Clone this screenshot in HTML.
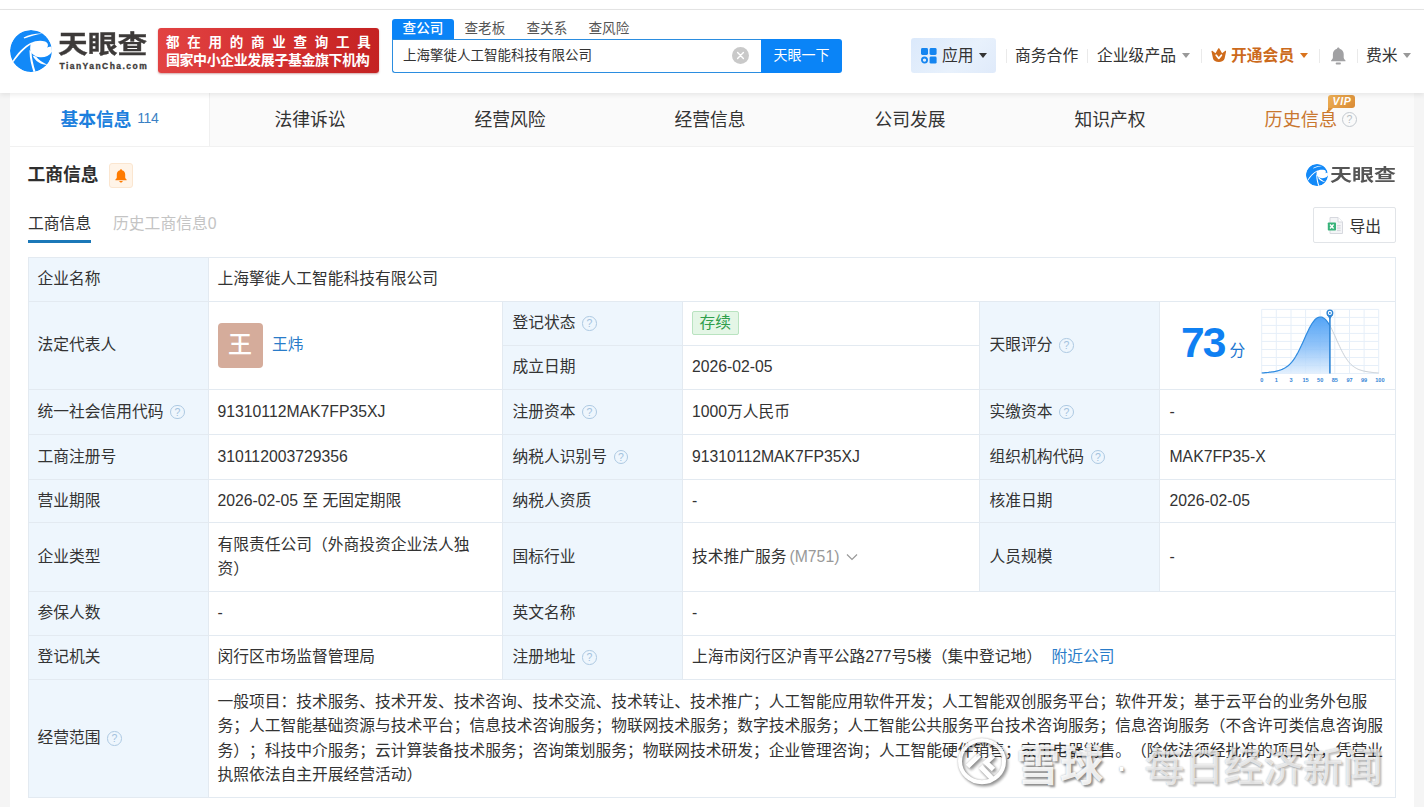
<!DOCTYPE html>
<html lang="zh-CN">
<head>
<meta charset="utf-8">
<title>天眼查</title>
<style>
*{box-sizing:border-box;margin:0;padding:0}
html,body{width:1424px;height:807px;overflow:hidden}
body{position:relative;background:#f5f5f5;font-family:"Liberation Sans","Noto Sans CJK SC",sans-serif;color:#333;text-spacing-trim:space-all;-webkit-font-smoothing:antialiased}
.abs{position:absolute;white-space:nowrap}
/* header */
#topstrip{left:0;top:0;width:1424px;height:9px;background:#fff}
#topline{left:0;top:9px;width:1424px;height:1px;background:#e6e6e6}
#header{left:0;top:10px;width:1424px;height:83px;background:#fff;box-shadow:0 2px 5px rgba(0,0,0,.08)}
#logotext{left:57.8px;top:24.5px;font-size:24.5px;font-weight:700;color:#3d3a39;-webkit-text-stroke:.35px #3d3a39;line-height:40px;letter-spacing:0;transform-origin:0 50%;transform:scaleX(1.215)}
#logosub{left:59.5px;top:58.5px;font-size:8.5px;font-weight:700;color:#3d3a39;-webkit-text-stroke:.3px #3d3a39;line-height:14px;letter-spacing:1.45px}
#banner{left:158px;top:28px;width:221px;height:45px;border-radius:3px;background:linear-gradient(90deg,#e24343 0%,#d32f2f 55%,#c42222 100%);box-shadow:0 1px 2px rgba(120,0,0,.35)}
#banner div{position:absolute;left:8px;color:#fff;font-weight:700;white-space:nowrap}
#b1{top:6px;left:8.5px;font-size:13.5px;line-height:18px;letter-spacing:7.75px}
#b2{top:23px;left:8.5px;font-size:14px;line-height:18px;letter-spacing:-.45px}
.stab{top:19px;height:20px;line-height:19px;font-size:13.6px;color:#555}
#stab1{left:392px;width:62px;background:#0a84f7;color:#fff;text-align:center;border-radius:3px 3px 0 0;font-weight:500}
#sinput{left:392px;top:39px;width:371px;height:34px;border:1px solid #2b8de0;border-right:none;border-radius:0 0 0 3px;background:#fff;font-size:13.5px;line-height:31.5px;padding-left:10px;color:#333}
#sbtn{left:761px;top:39px;width:81px;height:34px;background:#0a84f7;border-radius:0 3px 3px 0;color:#fff;font-size:14px;line-height:33px;text-align:center;font-weight:400}
#sclear{left:731.5px;top:46.5px;width:17px;height:17px;border-radius:50%;background:#c9c9c9}
#app{left:911px;top:38px;width:85px;height:35px;border-radius:3px;background:linear-gradient(135deg,#dbe9fb 0%,#e8f1fc 60%,#dfeafa 100%)}
.nav{top:44px;font-size:15.8px;line-height:24px;color:#333}
.sep{top:49px;width:1px;height:14px;background:#eaeaea}
.caret{width:0;height:0;border-left:4px solid transparent;border-right:4px solid transparent;border-top:5px solid #999}
/* tab bar */
#tabbar{left:10px;top:93px;width:1404px;height:53px;background:#fafafa}
#tabact{left:10px;top:93px;width:199.5px;height:53px;background:#fff;border-right:1px solid #f0f0f0}
#tabline{left:10px;top:145.5px;width:1404px;height:1px;background:#f1f1f1}
.tab{top:106px;width:200px;text-align:center;font-size:17.8px;line-height:28px;color:#333}
#content{left:10px;top:146.5px;width:1404px;height:661px;background:#fff}
/* section */
#h2{left:27.5px;top:161px;font-size:17.8px;font-weight:700;line-height:28px;color:#2e2e2e}
#bellbox{left:109px;top:163px;width:24px;height:25px;background:#fff4e8;border:1px solid #fbe6d0;border-radius:3px}
#st1{left:28px;top:212px;font-size:15.8px;line-height:24px;color:#333}
#st1u{left:28px;top:240px;width:63px;height:3px;background:#1b78b8}
#st2{left:113px;top:212px;font-size:15.8px;line-height:24px;color:#c4c4c4}
#export{left:1313px;top:207px;width:83px;height:36px;border:1px solid #e1e4e8;border-radius:2px;background:#fff}
#export span{position:absolute;left:35.5px;top:6.5px;font-size:15.8px;line-height:24px;color:#333}
/* table */
.c{position:absolute;border:1px solid #e3eaf1;font-size:15.75px;line-height:24.5px;color:#333;padding-left:9.5px;display:flex;align-items:center;white-space:nowrap;background:#fff}
.l{background:#eef6fd}
.q{display:inline-block;width:14.6px;height:14.6px;border:1.4px solid #adc9e2;border-radius:50%;margin-left:6.5px;flex:none;font-style:normal;font-size:10.5px;line-height:12.2px;text-align:center;color:#a3c2dd;font-family:"Liberation Sans",sans-serif}
.av{display:inline-block;width:45px;height:45px;border-radius:4px;background:#d5ac9b;color:#fff;font-size:24px;font-weight:500;line-height:43px;text-align:center;margin-right:9.5px;flex:none}
.tag{display:inline-block;height:23.5px;line-height:21.5px;padding:0 6.5px;border:1px solid #b9e3c0;background:#e4f6e6;border-radius:2px;color:#2f9e4c;font-size:15.75px;position:relative;top:-.5px}
a{color:#2a7cc9;text-decoration:none}
#wm{left:1016.5px;top:737.5px;line-height:56px;color:#fff;font-weight:500;text-shadow:1.5px 1.5px 2.5px rgba(0,0,0,.45),0 0 2px rgba(0,0,0,.35);letter-spacing:0}
</style>
</head>
<body>
<div class="abs" id="topstrip"></div>
<div class="abs" id="topline"></div>
<div class="abs" id="tabbar"></div>
<div class="abs" id="content"></div>
<div class="abs" id="tabact"></div>
<div class="abs" id="tabline"></div>
<div class="abs tab" style="left:10px;text-align:left;padding-left:50.5px;color:#1c7fdd;font-weight:700">基本信息<span style="font-weight:400;font-size:14px;color:#3b7fc4;margin-left:5.5px;position:relative;top:-3.3px;letter-spacing:-.3px">114</span></div>
<div class="abs tab" style="left:210px">法律诉讼</div>
<div class="abs tab" style="left:410px">经营风险</div>
<div class="abs tab" style="left:610px">经营信息</div>
<div class="abs tab" style="left:810px">公司发展</div>
<div class="abs tab" style="left:1010px">知识产权</div>
<div class="abs tab" style="left:1200.8px;color:#c9772f;font-size:18.1px">历史信息</div>
<div class="abs" style="left:1328px;top:95px;width:27px;height:13px;background:linear-gradient(135deg,#eeb055,#d98a35);border-radius:3px 3px 3px 0;color:#fff;font-size:10.5px;line-height:13.5px;font-weight:700;font-style:italic;text-align:center;font-family:'Liberation Sans',sans-serif;letter-spacing:.7px;padding-left:1px">VIP</div>
<svg class="abs" style="left:1328px;top:108px" width="6" height="5" viewBox="0 0 6 5"><path d="M0,0 L5,0 L0,5 Z" fill="#dd913a"/></svg>
<div class="abs" style="left:1342px;top:111.5px;width:15px;height:15px;border:1.3px solid #c3c9cf;border-radius:50%;font-size:10.5px;line-height:12.5px;text-align:center;color:#b8bec4;font-family:'Liberation Sans',sans-serif">?</div>


<div class="abs" id="header"></div>

<svg class="abs" style="left:10px;top:30px" width="42" height="42" viewBox="0 0 42 42">
<defs><clipPath id="lc"><circle cx="21" cy="21" r="21"/></clipPath></defs>
<g clip-path="url(#lc)">
<circle cx="21" cy="21" r="21" fill="#1289f8"/>
<path fill="#fff" d="M21,13 C25,10.8 31,10.2 35.2,11.6 C38,12.8 38.8,15.6 37,17.5 C39,16.6 41,16.4 43,16.4 L43,20.4 C40.6,25.2 35.4,27.8 30,27.3 C25.4,26.8 22,24.4 20.4,21.2 C19.9,18.2 20.2,15.2 21,13 Z"/>
<path fill="#fff" d="M21.4,12.6 C14,16.2 7,23.6 2.4,31 L3.6,32 C8,25.6 14,18.6 21.6,14 Z"/>
<path fill="#fff" d="M19.6,20 C19.2,28 21.6,36 23.6,42.4 L25.6,41.8 C23.4,35 21.6,28 21.6,22 Z"/>
<path fill="#fff" d="M22.6,25.4 C25,31 31,34.8 37.8,35 C32.6,32.4 28.2,29.6 26,26.4 Z"/>
<path fill="#fff" d="M13.6,7.6 C19,4.4 27,3 33.2,3.5 C27,4.4 20,6.2 14.4,8.6 Z"/>
</g></svg>
<div class="abs" id="logotext">天眼查</div>
<div class="abs" id="logosub">TianYanCha.com</div>
<div class="abs" id="banner"><div id="b1">都在用的商业查询工具</div><div id="b2">国家中小企业发展子基金旗下机构</div></div>
<div class="abs stab" id="stab1">查公司</div>
<div class="abs stab" style="left:464.5px">查老板</div>
<div class="abs stab" style="left:526.5px">查关系</div>
<div class="abs stab" style="left:588.5px">查风险</div>
<div class="abs" id="sinput">上海擎徙人工智能科技有限公司</div>
<div class="abs" id="sclear"><svg width="17" height="17" viewBox="0 0 17 17" style="display:block"><path d="M5.6,5.6 L11.4,11.4 M11.4,5.6 L5.6,11.4" stroke="#fff" stroke-width="1.4" stroke-linecap="round"/></svg></div>
<div class="abs" id="sbtn">天眼一下</div>
<div class="abs" id="app"></div>
<svg class="abs" style="left:921px;top:48px" width="16" height="16" viewBox="0 0 16 16"><rect x="0" y="0" width="7" height="7" rx="1.4" fill="#1585f0"/><rect x="8.6" y="0" width="7" height="7" rx="1.4" fill="#1585f0"/><rect x="8.6" y="8.6" width="7" height="7" rx="1.4" fill="#1585f0"/><circle cx="3.5" cy="12.1" r="2.6" fill="none" stroke="#1585f0" stroke-width="1.8"/></svg>
<div class="abs nav" style="left:942px">应用</div>
<div class="abs caret" style="left:979px;top:52.8px;border-top-color:#333"></div>
<div class="abs sep" style="left:1005.5px"></div>
<div class="abs nav" style="left:1015px">商务合作</div>
<div class="abs sep" style="left:1087px"></div>
<div class="abs nav" style="left:1097px">企业级产品</div>
<div class="abs caret" style="left:1181.5px;top:52.8px"></div>
<div class="abs sep" style="left:1200.5px"></div>
<svg class="abs" style="left:1210.8px;top:47.8px" width="15.6" height="14.2" viewBox="0 0 15.6 14.2"><path fill="#cf6b1b" d="M0.5,3.6 C0.3,2.9 1,2.5 1.6,3 L4.5,5.3 L7.1,0.7 C7.4,0.1 8.2,0.1 8.5,0.7 L11.1,5.3 L14,3 C14.6,2.5 15.3,2.9 15.1,3.6 L13.6,10.4 C13.1,12.6 10.8,14 7.8,14 C4.8,14 2.5,12.6 2,10.4 Z"/><path d="M5.2,7.2 L7.8,10.4 L10.4,7.2" fill="none" stroke="#fff" stroke-width="1.7" stroke-linecap="round" stroke-linejoin="round"/></svg>
<div class="abs nav" style="left:1231px;color:#cc6a1c;font-weight:700">开通会员</div>
<div class="abs caret" style="left:1299.5px;top:52.8px;border-top-color:#d9731d"></div>
<div class="abs sep" style="left:1318.5px"></div>
<svg class="abs" style="left:1329.8px;top:47px" width="16.6" height="18" viewBox="0 0 16 18"><path fill="#a1a1a3" d="M8,0.4 C8.8,0.4 9.3,1 9.3,1.7 C11.8,2.3 13.4,4.4 13.4,7 L13.4,10.6 C13.4,11.8 14.2,12.6 15.2,13.4 L15.2,14.2 L0.8,14.2 L0.8,13.4 C1.8,12.6 2.6,11.8 2.6,10.6 L2.6,7 C2.6,4.4 4.2,2.3 6.7,1.7 C6.7,1 7.2,0.4 8,0.4 Z"/><rect x="5.4" y="15.6" width="5.2" height="1.8" rx=".9" fill="#a1a1a3"/></svg>
<div class="abs sep" style="left:1356.5px"></div>
<div class="abs nav" style="left:1366px">费米</div>
<div class="abs caret" style="left:1403px;top:52.8px"></div>


<div class="abs" id="h2">工商信息</div>
<div class="abs" id="bellbox"><svg width="12" height="14" viewBox="0 0 12 14" style="position:absolute;left:5px;top:4.5px"><path fill="#ff7b00" d="M6,0.2 C6.6,0.2 7,0.6 7,1.2 C9,1.7 10.2,3.3 10.2,5.4 L10.2,8.2 C10.2,9.1 10.8,9.8 11.6,10.4 L11.6,11.2 L0.4,11.2 L0.4,10.4 C1.2,9.8 1.8,9.1 1.8,8.2 L1.8,5.4 C1.8,3.3 3,1.7 5,1.2 C5,0.6 5.4,0.2 6,0.2 Z"/><path fill="#ff7b00" d="M4.2,12 L7.8,12 C7.6,12.9 6.9,13.5 6,13.5 C5.1,13.5 4.4,12.9 4.2,12 Z"/></svg></div>
<div class="abs" id="st1">工商信息</div>
<div class="abs" id="st1u"></div>
<div class="abs" id="st2">历史工商信息0</div>
<svg class="abs" style="left:1305.8px;top:164.3px" width="22" height="22" viewBox="0 0 42 42">
<g clip-path="url(#lc)">
<circle cx="21" cy="21" r="21" fill="#1289f8"/>
<path fill="#fff" d="M21,13 C25,10.8 31,10.2 35.2,11.6 C38,12.8 38.8,15.6 37,17.5 C39,16.6 41,16.4 43,16.4 L43,20.4 C40.6,25.2 35.4,27.8 30,27.3 C25.4,26.8 22,24.4 20.4,21.2 C19.9,18.2 20.2,15.2 21,13 Z"/>
<path fill="#fff" d="M21.4,12.6 C14,16.2 7,23.6 2.4,31 L3.6,32 C8,25.6 14,18.6 21.6,14 Z"/>
<path fill="#fff" d="M19.6,20 C19.2,28 21.6,36 23.6,42.4 L25.6,41.8 C23.4,35 21.6,28 21.6,22 Z"/>
<path fill="#fff" d="M22.6,25.4 C25,31 31,34.8 37.8,35 C32.6,32.4 28.2,29.6 26,26.4 Z"/>
<path fill="#fff" d="M13.6,7.6 C19,4.4 27,3 33.2,3.5 C27,4.4 20,6.2 14.4,8.6 Z"/>
</g></svg>
<div class="abs" style="left:1330px;top:158px;font-size:16.8px;font-weight:700;color:#555;line-height:36px;transform-origin:0 50%;transform:scaleX(1.31)">天眼查</div>
<div class="abs" id="export"><svg width="17" height="17" viewBox="0 0 17 17" style="position:absolute;left:12.6px;top:9px"><path d="M3,0.5 L11,0.5 L15.5,5 L15.5,16.5 L3,16.5 Z" fill="#f4f5f7" stroke="#d6d8de" stroke-width="1"/><path d="M11,0.5 L11,5 L15.5,5" fill="#fff" stroke="#d6d8de" stroke-width="1"/><rect x="10" y="8" width="3.6" height="1.3" fill="#d6d8de"/><rect x="10" y="10.4" width="3.6" height="1.3" fill="#d6d8de"/><rect x="10" y="12.8" width="3.6" height="1.3" fill="#d6d8de"/><rect x="0.8" y="5.4" width="8.2" height="8.2" rx=".8" fill="#39b37a"/><path d="M3,7.6 L6.6,11.4 M6.6,7.6 L3,11.4" stroke="#fff" stroke-width="1.4"/></svg><span>导出</span></div>

<!--T0-->
<div class="c l" style="left:28px;top:257px;width:181px;height:45px;padding-left:8.5px;">企业名称</div>
<div class="c" style="left:208px;top:257px;width:1188px;height:45px;padding-left:8.5px;">上海擎徙人工智能科技有限公司</div>
<div class="c l" style="left:28px;top:301px;width:181px;height:89px;padding-left:8.5px;">法定代表人</div>
<div class="c" style="left:208px;top:301px;width:295px;height:89px;padding-left:8.5px;"><span class="av">王</span><a>王炜</a></div>
<div class="c l" style="left:502px;top:301px;width:181px;height:45px;padding-left:9.5px;">登记状态<i class="q">?</i></div>
<div class="c" style="left:682px;top:301px;width:298px;height:45px;padding-left:9px;"><span class="tag">存续</span></div>
<div class="c l" style="left:502px;top:345px;width:181px;height:45px;padding-left:9.5px;">成立日期</div>
<div class="c" style="left:682px;top:345px;width:298px;height:45px;padding-left:9px;">2026-02-05</div>
<div class="c l" style="left:979px;top:301px;width:181px;height:89px;padding-left:9.5px;">天眼评分<i class="q">?</i></div>
<div class="c" style="left:1159px;top:301px;width:237px;height:89px;padding-left:9.5px;"></div>
<div class="c l" style="left:28px;top:389px;width:181px;height:46px;padding-left:8.5px;">统一社会信用代码<i class="q">?</i></div>
<div class="c" style="left:208px;top:389px;width:295px;height:46px;padding-left:8.5px;">91310112MAK7FP35XJ</div>
<div class="c l" style="left:502px;top:389px;width:181px;height:46px;padding-left:9.5px;">注册资本<i class="q">?</i></div>
<div class="c" style="left:682px;top:389px;width:298px;height:46px;padding-left:9px;">1000万人民币</div>
<div class="c l" style="left:979px;top:389px;width:181px;height:46px;padding-left:9.5px;">实缴资本<i class="q">?</i></div>
<div class="c" style="left:1159px;top:389px;width:237px;height:46px;padding-left:9.5px;">-</div>
<div class="c l" style="left:28px;top:434px;width:181px;height:46px;padding-left:8.5px;">工商注册号</div>
<div class="c" style="left:208px;top:434px;width:295px;height:46px;padding-left:8.5px;">310112003729356</div>
<div class="c l" style="left:502px;top:434px;width:181px;height:46px;padding-left:9.5px;">纳税人识别号<i class="q">?</i></div>
<div class="c" style="left:682px;top:434px;width:298px;height:46px;padding-left:9px;">91310112MAK7FP35XJ</div>
<div class="c l" style="left:979px;top:434px;width:181px;height:46px;padding-left:9.5px;">组织机构代码<i class="q">?</i></div>
<div class="c" style="left:1159px;top:434px;width:237px;height:46px;padding-left:9.5px;">MAK7FP35-X</div>
<div class="c l" style="left:28px;top:479px;width:181px;height:44px;padding-left:8.5px;">营业期限</div>
<div class="c" style="left:208px;top:479px;width:295px;height:44px;padding-left:8.5px;">2026-02-05 至 无固定期限</div>
<div class="c l" style="left:502px;top:479px;width:181px;height:44px;padding-left:9.5px;">纳税人资质</div>
<div class="c" style="left:682px;top:479px;width:298px;height:44px;padding-left:9px;">-</div>
<div class="c l" style="left:979px;top:479px;width:181px;height:44px;padding-left:9.5px;">核准日期</div>
<div class="c" style="left:1159px;top:479px;width:237px;height:44px;padding-left:9.5px;">2026-02-05</div>
<div class="c l" style="left:28px;top:522px;width:181px;height:70px;padding-left:8.5px;">企业类型</div>
<div class="c" style="left:208px;top:522px;width:295px;height:70px;padding-left:8.5px;">有限责任公司（外商投资企业法人独<br>资）</div>
<div class="c l" style="left:502px;top:522px;width:181px;height:70px;padding-left:9.5px;">国标行业</div>
<div class="c" style="left:682px;top:522px;width:298px;height:70px;padding-left:9px;">技术推广服务<span style="color:#999;margin-left:3px">(M751)</span><svg width="12" height="8" viewBox="0 0 12 8" style="margin-left:7px"><path d="M1,1.5 L6,6.5 L11,1.5" fill="none" stroke="#999" stroke-width="1.2"/></svg></div>
<div class="c l" style="left:979px;top:522px;width:181px;height:70px;padding-left:9.5px;">人员规模</div>
<div class="c" style="left:1159px;top:522px;width:237px;height:70px;padding-left:9.5px;">-</div>
<div class="c l" style="left:28px;top:591px;width:181px;height:45px;padding-left:8.5px;">参保人数</div>
<div class="c" style="left:208px;top:591px;width:295px;height:45px;padding-left:8.5px;">-</div>
<div class="c l" style="left:502px;top:591px;width:181px;height:45px;padding-left:9.5px;">英文名称</div>
<div class="c" style="left:682px;top:591px;width:714px;height:45px;padding-left:9px;">-</div>
<div class="c l" style="left:28px;top:635px;width:181px;height:45px;padding-left:8.5px;">登记机关</div>
<div class="c" style="left:208px;top:635px;width:295px;height:45px;padding-left:8.5px;">闵行区市场监督管理局</div>
<div class="c l" style="left:502px;top:635px;width:181px;height:45px;padding-left:9.5px;">注册地址<i class="q">?</i></div>
<div class="c" style="left:682px;top:635px;width:714px;height:45px;padding-left:9px;">上海市闵行区沪青平公路277号5楼（集中登记地）<a style="margin-left:9.5px">附近公司</a></div>
<div class="c l" style="left:28px;top:679px;width:181px;height:119px;padding-left:8.5px;">经营范围<i class="q">?</i></div>
<div class="c" style="left:208px;top:679px;width:1188px;height:119px;padding-left:8.5px;"><div style="position:relative;top:.3px">一般项目：技术服务、技术开发、技术咨询、技术交流、技术转让、技术推广；人工智能应用软件开发；人工智能双创服务平台；软件开发；基于云平台的业务外包服<br>务；人工智能基础资源与技术平台；信息技术咨询服务；物联网技术服务；数字技术服务；人工智能公共服务平台技术咨询服务；信息咨询服务（不含许可类信息咨询服<br>务）；科技中介服务；云计算装备技术服务；咨询策划服务；物联网技术研发；企业管理咨询；人工智能硬件销售；家用电器销售。（除依法须经批准的项目外，凭营业<br>执照依法自主开展经营活动）</div></div>
<!--T1-->
<div class="abs" style="left:1181px;top:319px;font-size:42.5px;line-height:48px;font-weight:700;color:#0f80f2;letter-spacing:-1.9px">73</div><div class="abs" style="left:1229.5px;top:339px;font-size:15.75px;line-height:24px;color:#1c76cf">分</div><svg class="abs" style="left:1250px;top:303px" width="140" height="84" viewBox="0 0 140 84"><defs><linearGradient id="sg" x1="0" y1="0" x2="0" y2="1"><stop offset="0" stop-color="#4a9ff5" stop-opacity=".95"/><stop offset=".5" stop-color="#7db9f8" stop-opacity=".85"/><stop offset="1" stop-color="#dcecfd" stop-opacity=".8"/></linearGradient></defs><path d="M11.7,6.4 V70.5 M26.3,6.4 V70.5 M41.0,6.4 V70.5 M55.6,6.4 V70.5 M70.2,6.4 V70.5 M84.8,6.4 V70.5 M99.5,6.4 V70.5 M114.1,6.4 V70.5 M128.7,6.4 V70.5 M11.7,6.4 H128.7 M11.7,14.4 H128.7 M11.7,22.4 H128.7 M11.7,30.4 H128.7 M11.7,38.4 H128.7 M11.7,46.5 H128.7 M11.7,54.5 H128.7 M11.7,62.5 H128.7 M11.7,70.5 H128.7 " stroke="#e6eff9" stroke-width="1" fill="none"/><path d="M11.7,70.5 L11.7,70.0 L12.8,69.9 L14.0,69.8 L15.1,69.7 L16.2,69.6 L17.4,69.5 L18.5,69.4 L19.7,69.2 L20.8,69.1 L21.9,68.9 L23.1,68.8 L24.2,68.6 L25.3,68.4 L26.5,68.1 L27.6,67.8 L28.8,67.5 L29.9,67.2 L31.0,66.8 L32.2,66.4 L33.3,65.8 L34.4,65.3 L35.6,64.6 L36.7,63.8 L37.8,63.0 L39.0,62.0 L40.1,60.9 L41.3,59.6 L42.4,58.3 L43.5,56.8 L44.7,55.1 L45.8,53.3 L46.9,51.4 L48.1,49.3 L49.2,47.1 L50.3,44.7 L51.5,42.3 L52.6,39.9 L53.8,37.3 L54.9,34.8 L56.0,32.3 L57.2,29.8 L58.3,27.4 L59.4,25.1 L60.6,23.0 L61.7,21.0 L62.9,19.3 L64.0,17.8 L65.1,16.5 L66.3,15.5 L67.4,14.7 L68.5,14.3 L69.7,14.0 L70.8,14.0 L71.9,14.2 L73.1,14.7 L74.2,15.4 L75.4,16.4 L76.5,17.6 L77.6,19.1 L78.8,20.8 L79.9,22.8 L79.9,70.5 Z" fill="url(#sg)"/><path d="M79.9,22.8 L80.9,24.6 L81.9,26.5 L82.8,28.5 L83.8,30.6 L84.8,32.7 L85.8,34.9 L86.7,37.1 L87.7,39.3 L88.7,41.4 L89.7,43.5 L90.6,45.5 L91.6,47.5 L92.6,49.4 L93.6,51.2 L94.5,52.9 L95.5,54.5 L96.5,55.9 L97.5,57.3 L98.4,58.6 L99.4,59.7 L100.4,60.8 L101.4,61.8 L102.3,62.6 L103.3,63.4 L104.3,64.1 L105.3,64.7 L106.3,65.3 L107.2,65.8 L108.2,66.3 L109.2,66.7 L110.2,67.0 L111.1,67.3 L112.1,67.6 L113.1,67.9 L114.1,68.1 L115.0,68.3 L116.0,68.5 L117.0,68.7 L118.0,68.8 L118.9,69.0 L119.9,69.1 L120.9,69.2 L121.9,69.4 L122.8,69.5 L123.8,69.6 L124.8,69.7 L125.8,69.7 L126.7,69.8 L127.7,69.9 L128.7,70.0" fill="none" stroke="#c9d0d7" stroke-width="1"/><path d="M11.7,70.0 L12.8,69.9 L14.0,69.8 L15.1,69.7 L16.2,69.6 L17.4,69.5 L18.5,69.4 L19.7,69.2 L20.8,69.1 L21.9,68.9 L23.1,68.8 L24.2,68.6 L25.3,68.4 L26.5,68.1 L27.6,67.8 L28.8,67.5 L29.9,67.2 L31.0,66.8 L32.2,66.4 L33.3,65.8 L34.4,65.3 L35.6,64.6 L36.7,63.8 L37.8,63.0 L39.0,62.0 L40.1,60.9 L41.3,59.6 L42.4,58.3 L43.5,56.8 L44.7,55.1 L45.8,53.3 L46.9,51.4 L48.1,49.3 L49.2,47.1 L50.3,44.7 L51.5,42.3 L52.6,39.9 L53.8,37.3 L54.9,34.8 L56.0,32.3 L57.2,29.8 L58.3,27.4 L59.4,25.1 L60.6,23.0 L61.7,21.0 L62.9,19.3 L64.0,17.8 L65.1,16.5 L66.3,15.5 L67.4,14.7 L68.5,14.3 L69.7,14.0 L70.8,14.0 L71.9,14.2 L73.1,14.7 L74.2,15.4 L75.4,16.4 L76.5,17.6 L77.6,19.1 L78.8,20.8 L79.9,22.8" fill="none" stroke="#2f8be0" stroke-width="1.2"/><path d="M79.9,13.0 V70.5" stroke="#2f86d6" stroke-width="1.6" fill="none"/><path d="M77.0,11.9 L79.9,16.3 L82.8,11.9 Z" fill="#2f86d6"/><circle cx="79.9" cy="9.9" r="3.5" fill="#2f86d6"/><circle cx="79.9" cy="9.9" r="2.1" fill="#fff"/><circle cx="79.9" cy="9.9" r="1" fill="#2f86d6"/><text x="11.7" y="78.6" font-size="5.6" font-weight="700" fill="#3585d6" text-anchor="middle" font-family="Liberation Sans, sans-serif">0</text><text x="26.3" y="78.6" font-size="5.6" font-weight="700" fill="#3585d6" text-anchor="middle" font-family="Liberation Sans, sans-serif">1</text><text x="41.0" y="78.6" font-size="5.6" font-weight="700" fill="#3585d6" text-anchor="middle" font-family="Liberation Sans, sans-serif">3</text><text x="55.6" y="78.6" font-size="5.6" font-weight="700" fill="#3585d6" text-anchor="middle" font-family="Liberation Sans, sans-serif">15</text><text x="70.2" y="78.6" font-size="5.6" font-weight="700" fill="#3585d6" text-anchor="middle" font-family="Liberation Sans, sans-serif">50</text><text x="84.8" y="78.6" font-size="5.6" font-weight="700" fill="#3585d6" text-anchor="middle" font-family="Liberation Sans, sans-serif">85</text><text x="99.5" y="78.6" font-size="5.6" font-weight="700" fill="#3585d6" text-anchor="middle" font-family="Liberation Sans, sans-serif">97</text><text x="114.1" y="78.6" font-size="5.6" font-weight="700" fill="#3585d6" text-anchor="middle" font-family="Liberation Sans, sans-serif">99</text><text x="129.9" y="78.6" font-size="5.6" font-weight="700" fill="#3585d6" text-anchor="middle" font-family="Liberation Sans, sans-serif">100</text></svg>
<svg class="abs" style="left:954px;top:737px;overflow:visible;opacity:.9;filter:drop-shadow(2px 2px 1.5px rgba(0,0,0,.4)) drop-shadow(0 0 1px rgba(0,0,0,.3))" width="54" height="50" viewBox="0 0 54 50"><ellipse cx="28" cy="24.2" rx="22" ry="21" fill="none" stroke="#fff" stroke-width="4"/><path d="M25.5,18 L13.5,29.5 M39.5,18.5 L32,25.5 L39.5,32.5 M26.5,29.5 L39,42.5" stroke="#fff" stroke-width="5" stroke-linecap="butt" stroke-linejoin="miter" fill="none"/></svg>
<div class="abs" id="wm"><span style="font-size:43.5px;font-weight:700;color:rgba(255,255,255,.88);text-shadow:2px 2px 2px rgba(0,0,0,.4),0 0 2px rgba(0,0,0,.3)">雪球</span><span style="font-size:36px;margin:0 17px 0 12px;position:relative;top:-2px">·</span><span style="font-size:39.7px;color:rgba(255,255,255,.72);text-shadow:2px 2px 1.5px rgba(0,0,0,.22),0 0 1.5px rgba(0,0,0,.3)">每日经济新闻</span></div>
</body>
</html>
